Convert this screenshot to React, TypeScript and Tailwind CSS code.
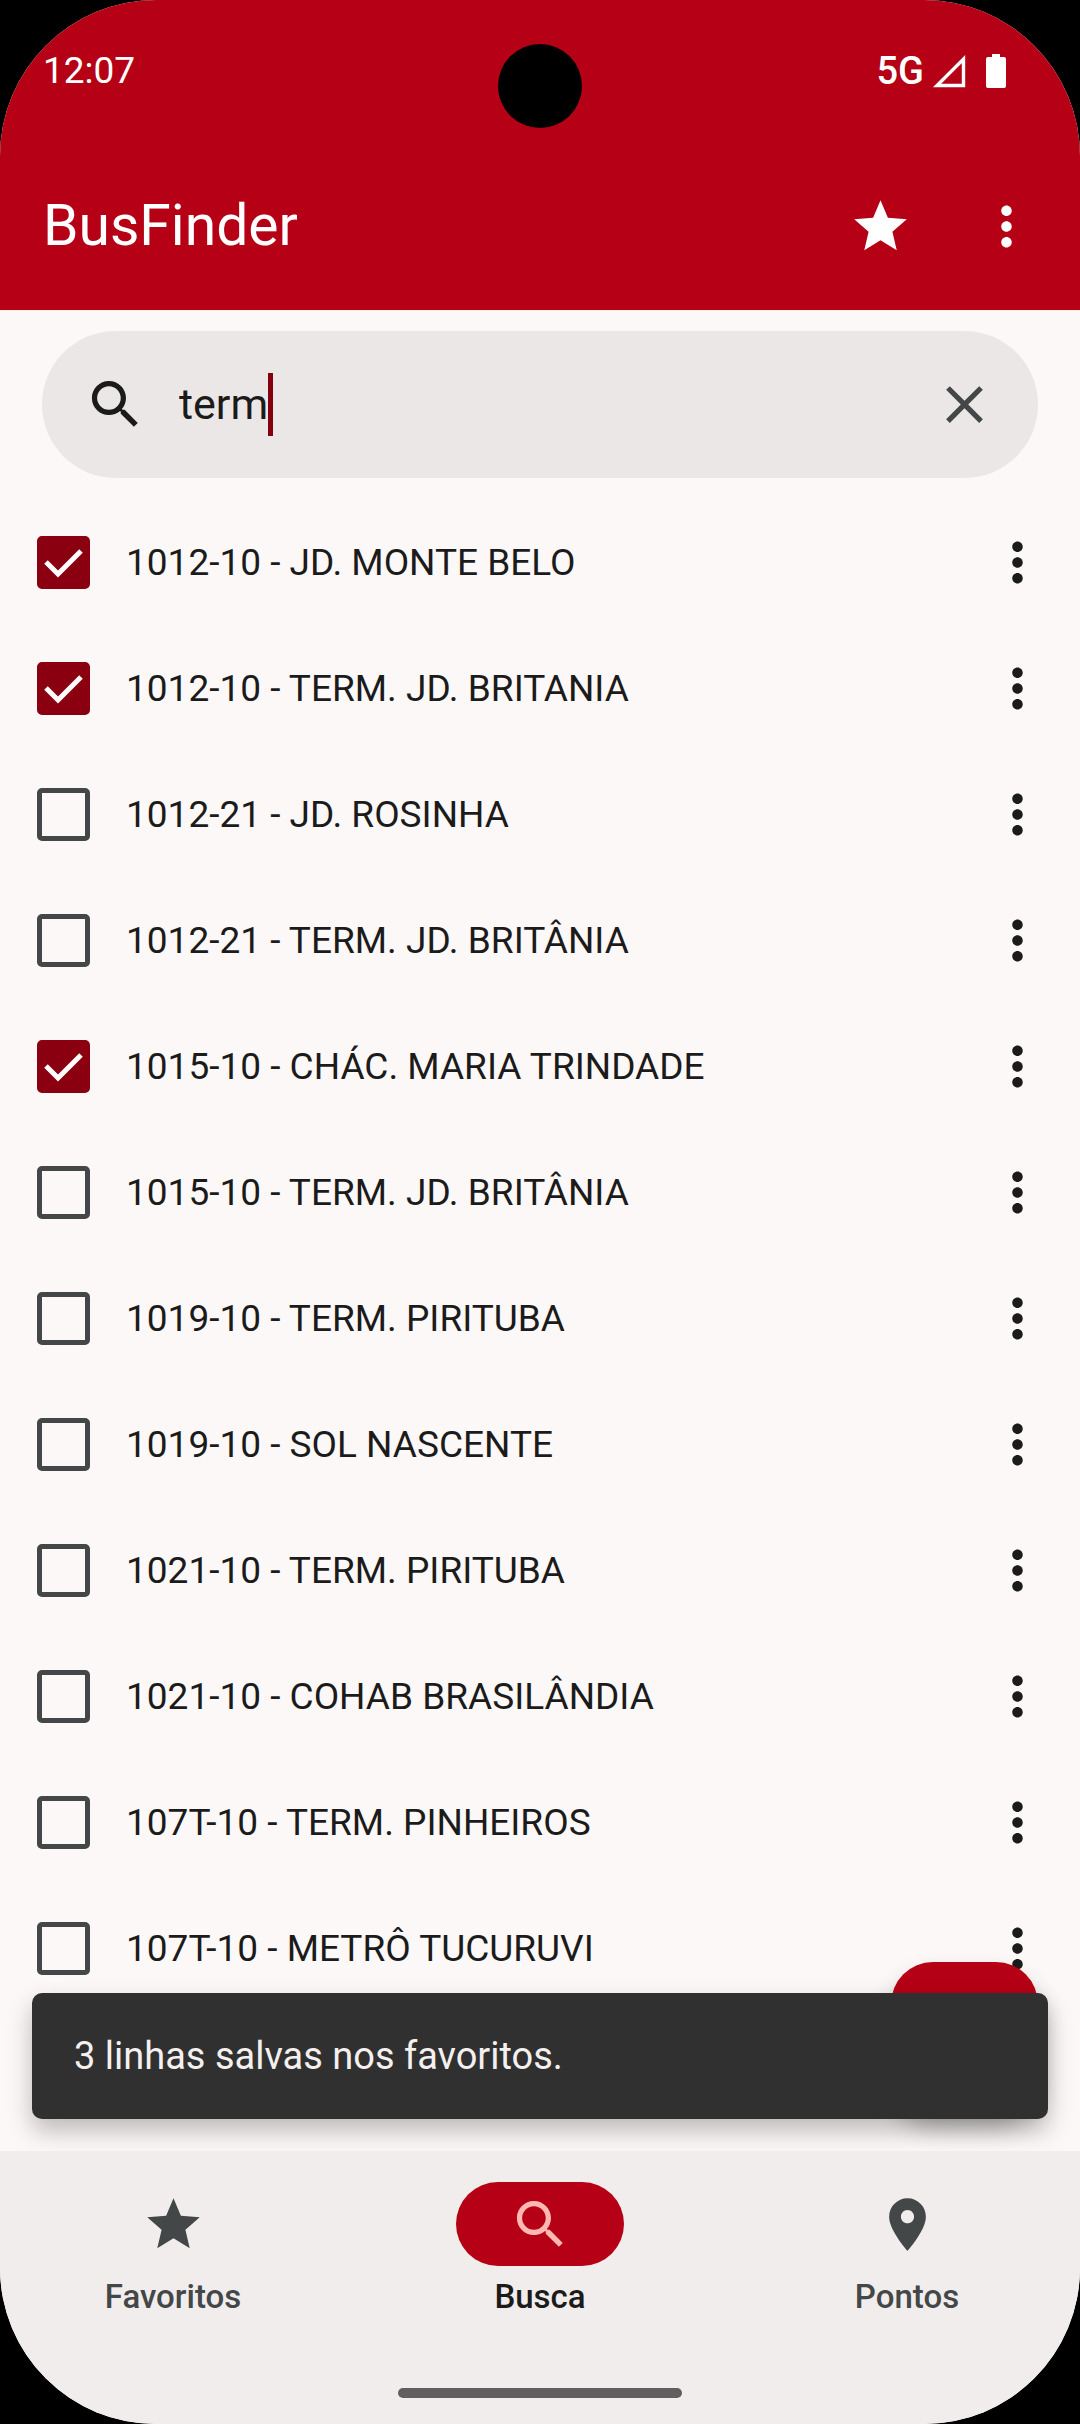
import { useState } from "react";

type Line = { id: number; name: string; saved: boolean };

const LINES: Line[] = [
  { id: 1, name: "1012-10 - JD. MONTE BELO", saved: true },
  { id: 2, name: "1012-10 - TERM. JD. BRITANIA", saved: true },
  { id: 3, name: "1012-21 - JD. ROSINHA", saved: false },
  { id: 4, name: "1012-21 - TERM. JD. BRITÂNIA", saved: false },
  { id: 5, name: "1015-10 - CHÁC. MARIA TRINDADE", saved: true },
  { id: 6, name: "1015-10 - TERM. JD. BRITÂNIA", saved: false },
  { id: 7, name: "1019-10 - TERM. PIRITUBA", saved: false },
  { id: 8, name: "1019-10 - SOL NASCENTE", saved: false },
  { id: 9, name: "1021-10 - TERM. PIRITUBA", saved: false },
  { id: 10, name: "1021-10 - COHAB BRASILÂNDIA", saved: false },
  { id: 11, name: "107T-10 - TERM. PINHEIROS", saved: false },
  { id: 12, name: "107T-10 - METRÔ TUCURUVI", saved: false },
];

const ICONS = {
  star: "M12 17.27 18.18 21l-1.64-7.03L22 9.24l-7.19-.61L12 2 9.19 8.63 2 9.24l5.46 4.73L5.82 21z",
  more: "M12 8c1.1 0 2-.9 2-2s-.9-2-2-2-2 .9-2 2 .9 2 2 2zm0 2c-1.1 0-2 .9-2 2s.9 2 2 2 2-.9 2-2-.9-2-2-2zm0 6c-1.1 0-2 .9-2 2s.9 2 2 2 2-.9 2-2-.9-2-2-2z",
  search:
    "M15.5 14h-.79l-.28-.27C15.41 12.59 16 11.11 16 9.5 16 5.91 13.09 3 9.5 3S3 5.91 3 9.5 5.91 16 9.5 16c1.61 0 3.09-.59 4.23-1.57l.27.28v.79l5 4.99L20.49 19l-4.99-5zm-6 0C7.01 14 5 11.99 5 9.5S7.01 5 9.5 5 14 7.01 14 9.5 11.99 14 9.5 14z",
  close:
    "M19 6.41 17.59 5 12 10.59 6.41 5 5 6.41 10.59 12 5 17.59 6.41 19 12 13.41 17.59 19 19 17.59 13.41 12z",
  place:
    "M12 2C8.13 2 5 5.13 5 9c0 5.25 7 13 7 13s7-7.75 7-13c0-3.87-3.13-7-7-7zm0 9.5c-1.38 0-2.5-1.12-2.5-2.5s1.12-2.5 2.5-2.5 2.5 1.12 2.5 2.5-1.12 2.5-2.5 2.5z",
};

function Icon({ name }: { name: keyof typeof ICONS }) {
  return (
    <svg viewBox="0 0 24 24" className="size-[63px] shrink-0 fill-current" aria-hidden="true">
      <path d={ICONS[name]} />
    </svg>
  );
}

function StatusBar() {
  return (
    <div className="relative flex h-[142px] items-center justify-between pr-[74px] pl-[43px] text-[37px] leading-[44px]">
      <span>12:07</span>
      <div className="absolute top-11 left-1/2 size-[84px] -translate-x-1/2 rounded-full bg-black" />
      <div className="flex items-center">
        <span className="mr-2 text-[38px] font-medium">5G</span>
        <svg viewBox="0 0 34 34" className="mr-5 size-[34px]" aria-hidden="true">
          <path d="M5 31.5H31.5V5z" fill="none" stroke="currentColor" strokeWidth="3.4" />
        </svg>
        <svg viewBox="0 0 20 34" className="h-[34px] w-5 fill-current" aria-hidden="true">
          <path d="M6 0h8v3h4a2 2 0 0 1 2 2v27a2 2 0 0 1-2 2H2a2 2 0 0 1-2-2V5a2 2 0 0 1 2-2h4z" />
        </svg>
      </div>
    </div>
  );
}

function SearchBar() {
  const [query, setQuery] = useState("term");
  return (
    <div className="mx-[42px] mt-5 flex h-[147px] items-center rounded-full bg-[#ebe7e6] px-[42px]">
      <label htmlFor="line-search" className="mr-8 text-[#1c1b1b]">
        <Icon name="search" />
      </label>
      <input
        id="line-search"
        type="text"
        aria-label="Buscar linha"
        value={query}
        onChange={(e) => setQuery(e.target.value)}
        className="[field-sizing:content] bg-transparent text-[43px] leading-[63px] text-[#1c1b1b] caret-transparent outline-none"
      />
      <span className="h-[63px] w-[5px] bg-[#85000e]" />
      <button type="button" aria-label="Limpar busca" className="ml-auto text-[#444748]" onClick={() => setQuery("")}>
        <Icon name="close" />
      </button>
    </div>
  );
}

function LineRow({ line }: { line: Line }) {
  const [checked, setChecked] = useState(line.saved);
  const id = `line-${line.id}`;
  return (
    <li className="flex h-[126px] items-center pr-[31px] pl-[37px]">
      <span className="relative size-[53px] shrink-0">
        <input
          id={id}
          type="checkbox"
          checked={checked}
          onChange={() => setChecked(!checked)}
          className="peer block size-full appearance-none rounded-[5px] border-5 border-[#444748] checked:border-[#8a0010] checked:bg-[#8a0010]"
        />
        <svg
          viewBox="0 0 53 53"
          className="pointer-events-none invisible absolute inset-0 size-full peer-checked:visible"
          aria-hidden="true"
        >
          <path d="M9 26 21 38 44 15" fill="none" stroke="#fff" strokeWidth="5" />
        </svg>
      </span>
      <label htmlFor={id} className="ml-9 grow text-[37px] leading-[53px] text-[#1c1b1b]">
        {line.name}
      </label>
      <button type="button" aria-label={`Opções de ${line.name}`} className="text-[#1c1b1b]">
        <Icon name="more" />
      </button>
    </li>
  );
}

function NavItem({ icon, label, active = false }: { icon: keyof typeof ICONS; label: string; active?: boolean }) {
  return (
    <a
      href={`#${label.toLowerCase()}`}
      aria-current={active ? "page" : undefined}
      className={`flex flex-1 flex-col items-center gap-[10px] ${active ? "text-[#1c1b1b]" : "text-[#444748]"}`}
    >
      <span
        className={`flex h-[84px] w-[168px] items-center justify-center rounded-full ${
          active ? "bg-[#b50015] text-[#ffb8b1]" : ""
        }`}
      >
        <Icon name={icon} />
      </span>
      <span className="text-[33px] leading-[42px] font-medium">{label}</span>
    </a>
  );
}

export default function App() {
  return (
    <div className="min-h-screen bg-black">
      <div className="flex min-h-screen flex-col overflow-hidden rounded-[156px] bg-[#fcf8f7] font-[Roboto,sans-serif]">
        <header className="border-b border-[#ffedea] bg-[#b50015] text-white">
          <StatusBar />
          <div className="flex h-[168px] items-center pr-[42px] pl-[43px]">
            <h1 className="grow text-[57px] leading-[74px]">BusFinder</h1>
            <button type="button" aria-label="Favoritos" className="mr-[63px]">
              <Icon name="star" />
            </button>
            <button type="button" aria-label="Mais opções">
              <Icon name="more" />
            </button>
          </div>
        </header>

        <main className="relative grow overflow-hidden">
          <SearchBar />
          <ul className="mt-[21px] pb-[140px]">
            {LINES.map((line) => (
              <LineRow key={line.id} line={line} />
            ))}
          </ul>
          <button
            type="button"
            aria-label="Salvar linhas"
            className="absolute right-[42px] bottom-[42px] size-[147px] rounded-[42px] bg-[#b50015] shadow-[0_16px_24px_rgba(0,0,0,0.3)]"
          />
          <div
            role="status"
            className="absolute inset-x-8 bottom-8 flex h-[126px] items-center rounded-[10px] bg-[#303030] px-[42px] text-[38px] leading-[53px] text-[#f4f0ef] shadow-[0_12px_24px_rgba(0,0,0,0.25)]"
          >
            3 linhas salvas nos favoritos.
          </div>
        </main>

        <footer className="flex flex-col items-center bg-[#f0edec] pt-[31px] pb-[26px]">
          <nav className="flex w-full gap-[21px]">
            <NavItem icon="star" label="Favoritos" />
            <NavItem icon="search" label="Busca" active />
            <NavItem icon="place" label="Pontos" />
          </nav>
          <div className="mt-[70px] h-[10px] w-[284px] rounded-full bg-[#605e5e]" />
        </footer>
      </div>
    </div>
  );
}
